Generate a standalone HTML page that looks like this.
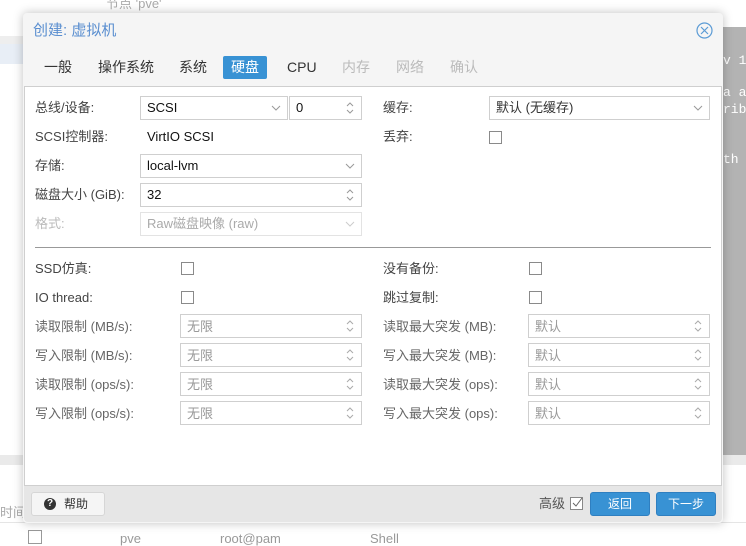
<!DOCTYPE html>
<html><head><meta charset="utf-8">
<style>
*{box-sizing:border-box;margin:0;padding:0}
body{width:746px;height:539px;overflow:hidden;position:relative;background:#fff;font-family:"Liberation Sans","Noto Sans CJK SC",sans-serif;font-size:13px;color:#333}
.a{position:absolute;white-space:nowrap}
.lbl{position:absolute;font-size:13px;color:#444;line-height:16px;white-space:nowrap}
.lbl.d{color:#666}
.lbl.x{color:#bbb}
.f{position:absolute;height:24px;border:1px solid #cfcfcf;background:#fff;padding-left:6px;display:flex;align-items:center;font-size:13px;line-height:16px;color:#111;white-space:nowrap}
.f.g{color:#999;padding-top:2px}
.f.x{color:#aaa;border-color:#e3e3e3}
.f svg{position:absolute;right:6px;top:5px}
.cb{position:absolute;width:13px;height:13px;border:1px solid #8a8a8a;background:#fff}
.tab{position:absolute;top:56px;height:23px;line-height:23px;font-size:14px;color:#333;padding:0 8px}
.mono{position:absolute;font-family:'Liberation Mono',monospace;color:#fff;font-size:13px;line-height:14px;white-space:pre}
</style></head><body>
<div class="a" style="left:106px;top:0;color:#aaa;font-size:13px;line-height:14px;margin-top:-3px">节点 'pve'</div>
<div class="a" style="left:0;top:36px;width:30px;height:8px;background:#eee"></div>
<div class="a" style="left:0;top:44px;width:30px;height:20px;background:#e8eef6"></div>
<div class="a" style="left:723px;top:27px;width:23px;height:428px;background:#b3b3b3;overflow:hidden">
<div class="mono" style="left:0px;top:27px">v 1</div>
<div class="mono" style="left:0px;top:59px">a ai</div>
<div class="mono" style="left:0px;top:76px">rib</div>
<div class="mono" style="left:0px;top:126px">th</div>
</div>
<div class="a" style="left:0;top:455px;width:746px;height:10px;background:#eaeaea"></div>
<div class="a" style="left:0;top:502px;color:#aaa">时间</div>
<div class="a" style="left:0;top:522px;width:746px;height:1px;background:#e5e5e5"></div>
<div class="a" style="left:28px;top:530px;width:14px;height:14px;border:1px solid #999"></div>
<div class="a" style="left:120px;top:531px;color:#999">pve</div>
<div class="a" style="left:220px;top:531px;color:#999">root@pam</div>
<div class="a" style="left:370px;top:531px;color:#999">Shell</div>

<div class="a" style="left:23px;top:13px;width:700px;height:510px;background:#f5f5f5;border-radius:4px;box-shadow:0 0 10px rgba(0,0,0,.25)">
<div class="a" style="left:10px;top:8px;font-size:15px;line-height:20px;color:#5b8fd0">创建: 虚拟机</div>
<svg class="a" style="left:673px;top:9px" width="17" height="17" viewBox="0 0 17 17"><circle cx="8.5" cy="8.5" r="7.5" fill="none" stroke="#5b9bd5" stroke-width="1.2"/><path d="M5 5L12 12M12 5L5 12" stroke="#5b9bd5" stroke-width="1.2"/></svg>
</div>
<div class="tab" style="left:36px">一般</div>
<div class="tab" style="left:90px">操作系统</div>
<div class="tab" style="left:171px">系统</div>
<div class="tab" style="left:223px;background:#3892d4;color:#fff;border-radius:2px">硬盘</div>
<div class="tab" style="left:279px">CPU</div>
<div class="tab" style="left:334px;color:#bbb">内存</div>
<div class="tab" style="left:388px;color:#bbb">网络</div>
<div class="tab" style="left:442px;color:#bbb">确认</div>

<div class="a" style="left:24px;top:86px;width:698px;height:400px;background:#fff;border:1px solid #cfcfcf"></div>

<div class="lbl" style="left:35px;top:100px">总线/设备:</div>
<div class="f" style="left:140px;top:96px;width:148px">SCSI<svg width="10" height="10" style="top:6px"><path d="M1 3L5 7L9 3" fill="none" stroke="#999"/></svg></div>
<div class="f" style="left:289px;top:96px;width:73px">0<svg width="10" height="14" style="top:4px"><path d="M2 5L5 2L8 5M2 9L5 12L8 9" fill="none" stroke="#999"/></svg></div>
<div class="lbl" style="left:35px;top:129px">SCSI控制器:</div>
<div class="a" style="left:147px;top:129px;color:#111">VirtIO SCSI</div>
<div class="lbl" style="left:35px;top:158px">存储:</div>
<div class="f" style="left:140px;top:154px;width:222px">local-lvm<svg width="10" height="10" style="top:6px"><path d="M1 3L5 7L9 3" fill="none" stroke="#999"/></svg></div>
<div class="lbl" style="left:35px;top:187px">磁盘大小 (GiB):</div>
<div class="f" style="left:140px;top:183px;width:222px">32<svg width="10" height="14" style="top:4px"><path d="M2 5L5 2L8 5M2 9L5 12L8 9" fill="none" stroke="#999"/></svg></div>
<div class="lbl x" style="left:35px;top:216px">格式:</div>
<div class="f x" style="left:140px;top:212px;width:222px">Raw磁盘映像 (raw)<svg width="10" height="10" style="top:6px"><path d="M1 3L5 7L9 3" fill="none" stroke="#ccc"/></svg></div>

<div class="lbl" style="left:383px;top:100px">缓存:</div>
<div class="f" style="left:489px;top:96px;width:221px;color:#333">默认 (无缓存)<svg width="10" height="10" style="top:6px"><path d="M1 3L5 7L9 3" fill="none" stroke="#999"/></svg></div>
<div class="lbl" style="left:383px;top:129px">丢弃:</div>
<div class="cb" style="left:489px;top:131px"></div>

<div class="a" style="left:35px;top:247px;width:676px;height:1px;background:#999"></div>

<div class="lbl" style="left:35px;top:261px">SSD仿真:</div>
<div class="cb" style="left:181px;top:262px"></div>
<div class="lbl" style="left:35px;top:290px">IO thread:</div>
<div class="cb" style="left:181px;top:291px"></div>
<div class="lbl" style="left:383px;top:261px">没有备份:</div>
<div class="cb" style="left:529px;top:262px"></div>
<div class="lbl" style="left:383px;top:290px">跳过复制:</div>
<div class="cb" style="left:529px;top:291px"></div>

<div class="lbl d" style="left:35px;top:319px">读取限制 (MB/s):</div>
<div class="f g" style="left:180px;top:314px;width:182px">无限<svg width="10" height="14" style="top:4px"><path d="M2 5L5 2L8 5M2 9L5 12L8 9" fill="none" stroke="#aaa"/></svg></div>
<div class="lbl d" style="left:35px;top:348px">写入限制 (MB/s):</div>
<div class="f g" style="left:180px;top:343px;width:182px">无限<svg width="10" height="14" style="top:4px"><path d="M2 5L5 2L8 5M2 9L5 12L8 9" fill="none" stroke="#aaa"/></svg></div>
<div class="lbl d" style="left:35px;top:377px">读取限制 (ops/s):</div>
<div class="f g" style="left:180px;top:372px;width:182px">无限<svg width="10" height="14" style="top:4px"><path d="M2 5L5 2L8 5M2 9L5 12L8 9" fill="none" stroke="#aaa"/></svg></div>
<div class="lbl d" style="left:35px;top:406px">写入限制 (ops/s):</div>
<div class="f g" style="left:180px;top:401px;width:182px">无限<svg width="10" height="14" style="top:4px"><path d="M2 5L5 2L8 5M2 9L5 12L8 9" fill="none" stroke="#aaa"/></svg></div>

<div class="lbl d" style="left:383px;top:319px">读取最大突发 (MB):</div>
<div class="f g" style="left:528px;top:314px;width:182px">默认<svg width="10" height="14" style="top:4px"><path d="M2 5L5 2L8 5M2 9L5 12L8 9" fill="none" stroke="#aaa"/></svg></div>
<div class="lbl d" style="left:383px;top:348px">写入最大突发 (MB):</div>
<div class="f g" style="left:528px;top:343px;width:182px">默认<svg width="10" height="14" style="top:4px"><path d="M2 5L5 2L8 5M2 9L5 12L8 9" fill="none" stroke="#aaa"/></svg></div>
<div class="lbl d" style="left:383px;top:377px">读取最大突发 (ops):</div>
<div class="f g" style="left:528px;top:372px;width:182px">默认<svg width="10" height="14" style="top:4px"><path d="M2 5L5 2L8 5M2 9L5 12L8 9" fill="none" stroke="#aaa"/></svg></div>
<div class="lbl d" style="left:383px;top:406px">写入最大突发 (ops):</div>
<div class="f g" style="left:528px;top:401px;width:182px">默认<svg width="10" height="14" style="top:4px"><path d="M2 5L5 2L8 5M2 9L5 12L8 9" fill="none" stroke="#aaa"/></svg></div>

<div class="a" style="left:24px;top:486px;width:698px;height:36px;background:#e6e6e6;border-radius:0 0 4px 4px"></div>
<div class="a" style="left:31px;top:492px;width:74px;height:24px;background:#f5f5f5;border:1px solid #d6d6d6;border-radius:3px;line-height:22px;font-size:12px;color:#333;padding-left:32px">帮助</div>
<div class="a" style="left:44px;top:498px;width:12px;height:12px;border-radius:50%;background:#333;color:#fff;font-size:10px;font-weight:bold;line-height:12px;text-align:center">?</div>
<div class="a" style="left:539px;top:496px;font-size:13px;line-height:16px;color:#555">高级</div>
<div class="a" style="left:570px;top:497px;width:13px;height:13px;border:1px solid #888;background:#fff"></div>
<svg class="a" style="left:571px;top:497px" width="12" height="12"><path d="M2 6L5 9L11 1" fill="none" stroke="#666" stroke-width="1"/></svg>
<div class="a" style="left:590px;top:492px;width:60px;height:24px;background:#3892d4;border:1px solid #2f7fc0;border-radius:3px;color:#fff;text-align:center;line-height:22px;font-size:12px">返回</div>
<div class="a" style="left:656px;top:492px;width:60px;height:24px;background:#3892d4;border:1px solid #2f7fc0;border-radius:3px;color:#fff;text-align:center;line-height:22px;font-size:12px">下一步</div>
</body></html>
